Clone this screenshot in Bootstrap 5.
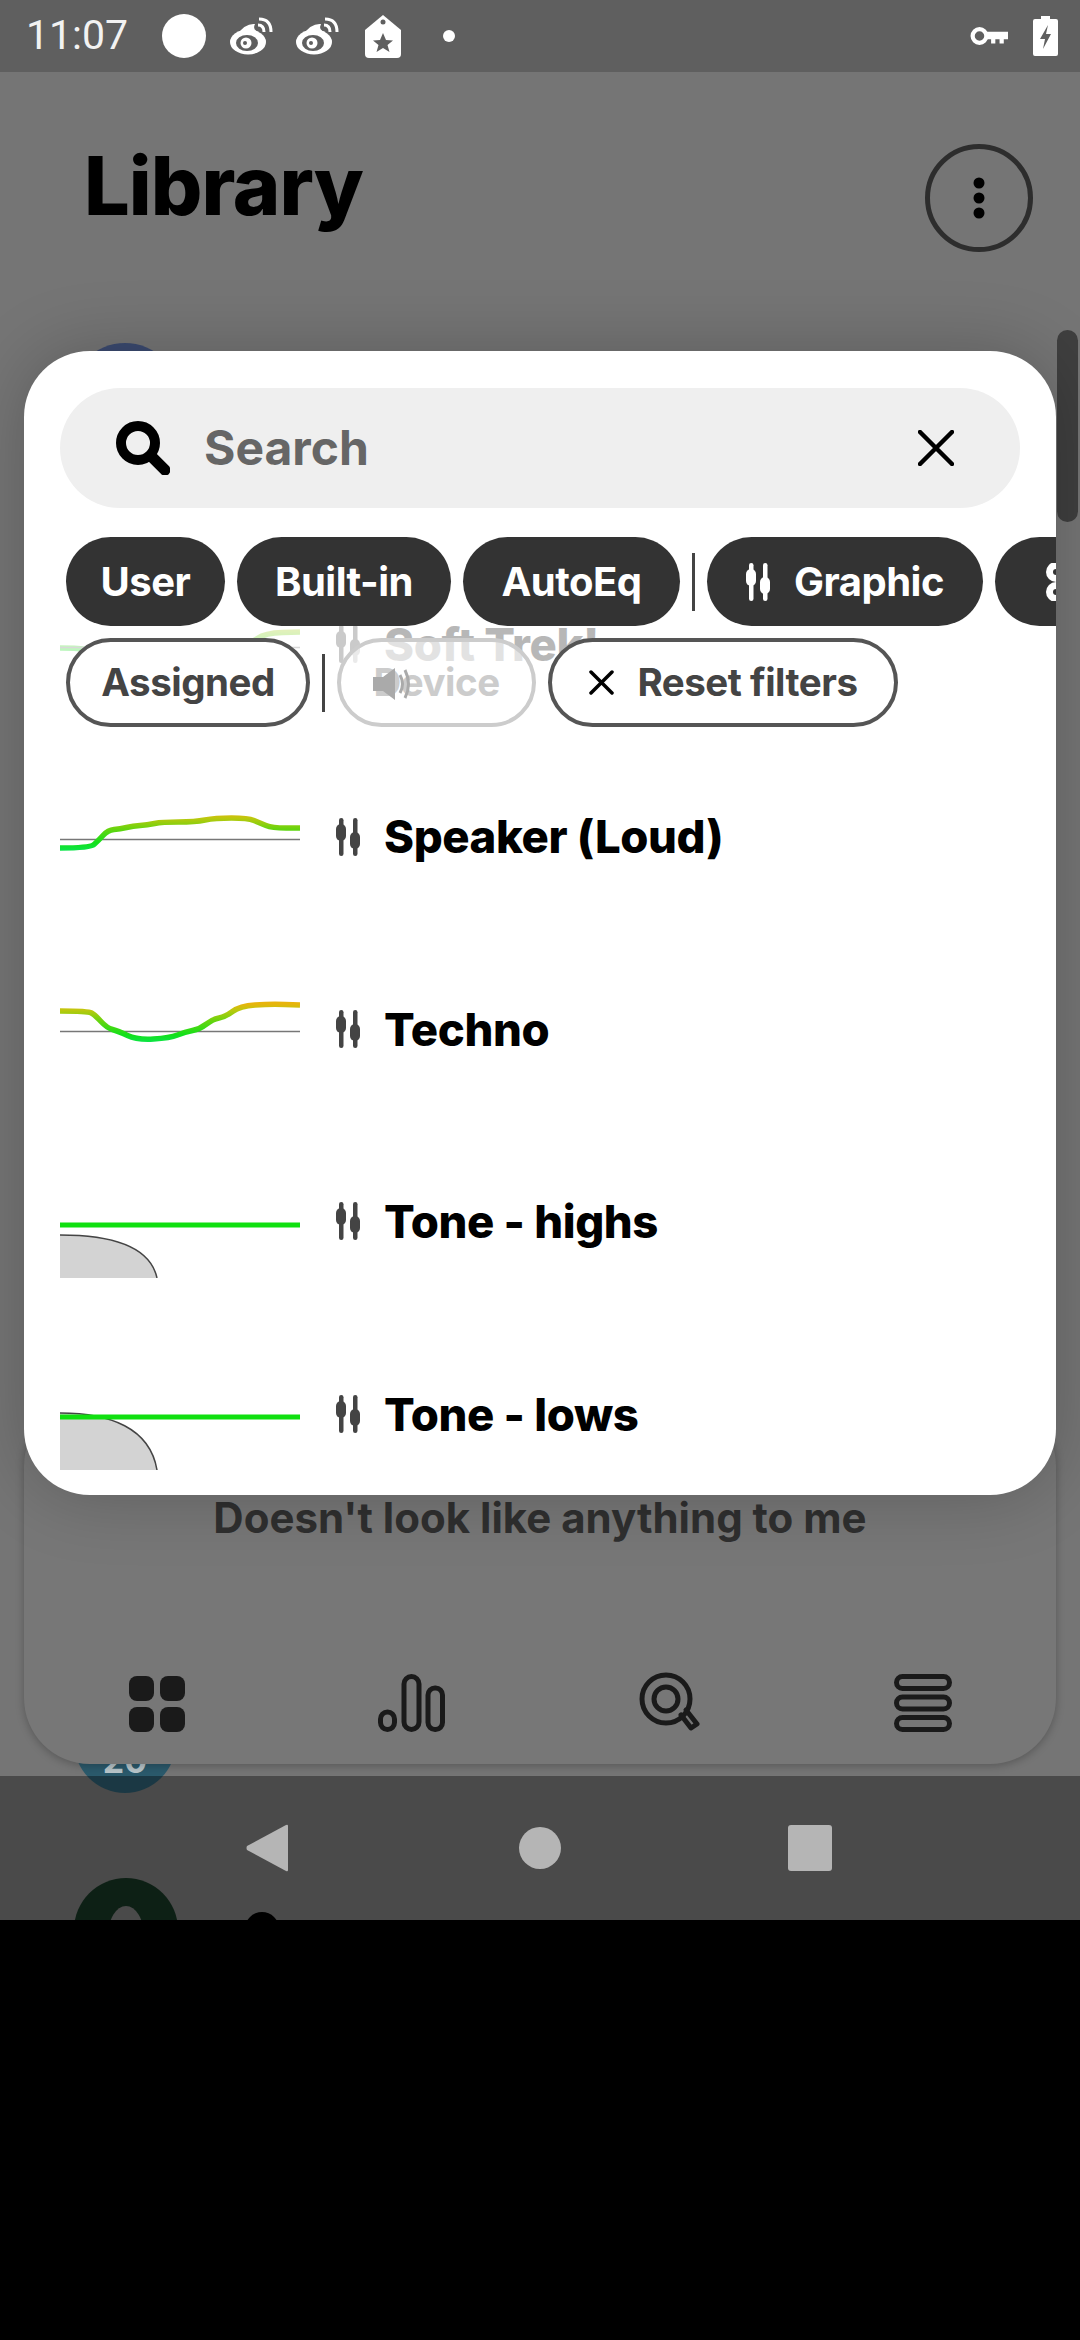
<!DOCTYPE html>
<html lang="en">
<head>
  <meta charset="UTF-8">
  <meta name="viewport" content="width=device-width, initial-scale=1.0">
  <title>Library</title>
  <link href="https://cdn.jsdelivr.net/npm/bootstrap@5.3.3/dist/css/bootstrap.min.css" rel="stylesheet">
  <style>
    body {
      background: #000;
      font-family: "Inter", "Lato", sans-serif;
    }

    .phone {
      position: relative;
      width: 1080px;
      height: 1920px;
      overflow: hidden;
      background: #757575;
    }

    /* status bar */
    .status-bar {
      position: relative;
      z-index: 3;
      height: 72px;
      padding: 0 22px 0 26px;
      background: #5f5f5f;
    }

    .status-time {
      width: 136px;
      font-family: "Roboto", sans-serif;
      font-size: 41px;
      color: #f2f2f2;
    }

    .st-weibo1 { margin-left: 23px; }
    .st-weibo2 { margin-left: 22px; }
    .st-tag { margin-left: 26px; }
    .st-dot { margin-left: 42px; }
    .st-batt { margin-left: 25px; }

    /* page behind the sheet */
    .page-head {
      padding: 72px 47px 0 84px;
    }

    .page-title {
      margin: -11px 0 0;
      font-size: 81px;
      font-weight: 800;
      letter-spacing: -1px;
      line-height: 106px;
      color: #000;
    }

    .round-btn {
      width: 108px;
      height: 108px;
      border: 5px solid #2d2d2d;
      border-radius: 50%;
    }

    .avatar {
      position: absolute;
      border-radius: 50%;
    }

    .avatar-top {
      left: 70px;
      top: 343px;
      width: 110px;
      height: 110px;
      background: #3b4a70;
    }

    .avatar-mid {
      left: 74px;
      top: 1691px;
      width: 102px;
      height: 102px;
      padding-top: 44px;
      background: #2b5a6c;
      color: #b9c6cb;
      font-size: 34px;
      font-weight: 700;
      text-align: center;
    }

    .avatar-low {
      left: 74px;
      top: 1878px;
      width: 104px;
      height: 104px;
      background: #163322;
    }

    .avatar-hole {
      position: absolute;
      left: 34px;
      top: 28px;
      width: 36px;
      height: 60px;
      border-radius: 50%;
      background: #757575;
    }

    .item-dot {
      position: absolute;
      left: 245px;
      top: 1912px;
      width: 34px;
      height: 34px;
      border-radius: 50%;
      background: #000;
    }

    .scroll-thumb {
      position: absolute;
      z-index: 1;
      left: 1057px;
      top: 330px;
      width: 21px;
      height: 192px;
      border-radius: 11px;
      background: #3f3f3f;
    }

    .bottom-card {
      position: absolute;
      left: 24px;
      top: 1400px;
      width: 1032px;
      height: 364px;
      padding-top: 88px;
      border-radius: 66px;
      background: #777;
      box-shadow: 0 2px 8px rgba(0, 0, 0, .25);
    }

    .empty-text {
      font-size: 42px;
      font-weight: 700;
      line-height: 60px;
      color: #2f2f2f;
      text-align: center;
    }

    .tab-row {
      position: absolute;
      left: 0;
      right: 0;
      top: 272px;
      padding: 0 104px 0 105px;
    }

    /* android nav bar */
    .nav-bar {
      position: absolute;
      z-index: 3;
      left: 0;
      right: 0;
      top: 1776px;
      height: 144px;
      padding-left: 246px;
      background: rgba(0, 0, 0, .37);
    }

    .nav-home { margin-left: 231px; }
    .nav-recent { margin-left: 227px; }

    /* filter sheet */
    .sheet {
      position: absolute;
      z-index: 2;
      left: 24px;
      top: 351px;
      width: 1032px;
      height: 1144px;
      overflow: hidden;
      border-radius: 66px;
      background: #fff;
      box-shadow: 0 0 70px rgba(0, 0, 0, .22);
    }

    .search-box {
      height: 120px;
      margin: 37px 36px 0;
      padding: 0 66px 0 56px;
      border-radius: 60px;
      background: #efefef;
    }

    .search-text {
      margin-left: 34px;
      font-size: 48px;
      font-weight: 700;
      color: #666;
    }

    .chip-row {
      height: 89px;
      margin-top: 29px;
      padding-left: 42px;
      gap: 12px;
      overflow: hidden;
    }

    .chip {
      flex: none;
      height: 89px;
      border-radius: 45px;
      font-size: 40px;
      font-weight: 700;
      letter-spacing: -.5px;
      white-space: nowrap;
    }

    .chip-on {
      background: #333;
      color: #fff;
    }

    .chip-off {
      background: #fff;
      border: 4px solid #555;
      color: #444;
      font-size: 38.5px;
    }

    .chip-user { width: 159px; }
    .chip-builtin { width: 214px; }
    .chip-autoeq { width: 217px; }
    .chip-graphic { width: 276px; gap: 24px; }
    .chip-param { width: 120px; padding-left: 45px; }
    .chip-assigned { width: 244px; }
    .chip-reset { width: 350px; gap: 24px; }

    .chip-device {
      position: relative;
      width: 199px;
      background: rgba(255, 255, 255, .6);
      border-color: #ccc;
      color: #ccc;
    }

    .device-icon {
      position: absolute;
      left: 32px;
      top: 25px;
    }

    .chip-sep {
      flex: none;
      align-self: center;
      width: 3px;
      height: 58px;
      background: #444;
    }

    .overlay-chips {
      position: absolute;
      z-index: 1;
      left: 42px;
      top: 287px;
      gap: 12px;
    }

    .eq-list {
      overflow: hidden;
      height: 868px;
    }

    .eq-row {
      flex: none;
      height: 192.4px;
      padding-left: 36px;
      gap: 36px;
    }

    .eq-row:first-child {
      margin-top: -75px;
      opacity: .28;
    }

    .eq-icon {
      margin-top: -6px;
    }

    .eq-name {
      margin: -4px 0 0 -12px;
      font-size: 45.5px;
      font-weight: 800;
      letter-spacing: -.4px;
      color: #000;
      white-space: nowrap;
    }
  </style>
</head>
<body>

<div class="phone">

  <!-- Status bar -->
  <div class="status-bar d-flex align-items-center">
    <div class="status-time">11:07</div>
    <svg width="44" height="44" viewBox="0 0 44 44"><circle cx="22" cy="22" r="22" fill="#fff"/></svg>
    <svg width="44" height="38" class="st-weibo1" viewBox="0 0 44 38">
      <ellipse cx="19" cy="25" rx="18" ry="12.5" fill="#fff"/>
      <path d="M8 18 Q16 6 26 7 Q23 13 30 15" fill="#fff"/>
      <ellipse cx="18" cy="26" rx="11" ry="8" fill="#5f5f5f"/>
      <circle cx="17" cy="26" r="5.5" fill="#fff"/>
      <circle cx="16" cy="26" r="2" fill="#5f5f5f"/>
      <path d="M29 8 Q35 8 35 15 M30 2 Q42 2 42 15" fill="none" stroke="#fff" stroke-width="3"/>
    </svg>
    <svg width="44" height="38" class="st-weibo2" viewBox="0 0 44 38">
      <ellipse cx="19" cy="25" rx="18" ry="12.5" fill="#fff"/>
      <path d="M8 18 Q16 6 26 7 Q23 13 30 15" fill="#fff"/>
      <ellipse cx="18" cy="26" rx="11" ry="8" fill="#5f5f5f"/>
      <circle cx="17" cy="26" r="5.5" fill="#fff"/>
      <circle cx="16" cy="26" r="2" fill="#5f5f5f"/>
      <path d="M29 8 Q35 8 35 15 M30 2 Q42 2 42 15" fill="none" stroke="#fff" stroke-width="3"/>
    </svg>
    <svg width="36" height="43" class="st-tag" viewBox="0 0 36 43">
      <path d="M18 0 L36 15 V39 Q36 43 32 43 H4 Q0 43 0 39 V15 Z" fill="#fff"/>
      <circle cx="18" cy="7" r="2.5" fill="#5f5f5f"/>
      <path d="M18 18 L21 25 L28 25.500 L22.500 30 L24.500 37 L18 33 L11.500 37 L13.500 30 L8 25.500 L15 25 Z" fill="#5f5f5f"/>
    </svg>
    <svg width="12" height="12" class="st-dot" viewBox="0 0 12 12"><circle cx="6" cy="6" r="6" fill="#fff"/></svg>
    <svg width="38" height="24" class="ms-auto" viewBox="0 0 36 22">
      <circle cx="9" cy="11" r="6.500" fill="none" stroke="#fff" stroke-width="4"/>
      <path d="M15 7 H36 V14 H32 V18 H28 V14 H24 V18 H20 V14 H15 Z" fill="#fff"/>
    </svg>
    <svg width="25" height="40" class="st-batt" viewBox="0 0 25 40">
      <path d="M8 0 H17 V3 H23 Q25 3 25 5 V38 Q25 40 23 40 H2 Q0 40 0 38 V5 Q0 3 2 3 H8 Z" fill="#fff"/>
      <path d="M15 9 L7 23 H12 L10 33 L18 18 H13 Z" fill="#5f5f5f"/>
    </svg>
  </div>

  <!-- Library page behind the sheet -->
  <div class="page-head d-flex justify-content-between align-items-start">
    <h1 class="page-title">Library</h1>
    <div class="round-btn d-flex align-items-center justify-content-center">
      <svg width="12" height="42" viewBox="0 0 12 42"><circle cx="6" cy="6" r="5.500"/><circle cx="6" cy="21" r="5.500"/><circle cx="6" cy="36" r="5.500"/></svg>
    </div>
  </div>

  <div class="avatar avatar-top"></div>
  <div class="avatar avatar-mid">20</div>
  <div class="avatar avatar-low"><div class="avatar-hole"></div></div>
  <div class="item-dot"></div>
  <div class="scroll-thumb"></div>

  <div class="bottom-card">
    <div class="empty-text">Doesn't look like anything to me</div>
    <div class="tab-row d-flex justify-content-between align-items-center">
      <svg width="56" height="58" viewBox="0 0 56 58" fill="#1a1a1a">
        <rect x="0" y="2" width="25" height="25" rx="8"/><rect x="31" y="2" width="25" height="25" rx="8"/>
        <rect x="0" y="33" width="25" height="25" rx="8"/><rect x="31" y="33" width="25" height="25" rx="8"/>
      </svg>
      <svg width="67" height="58" viewBox="0 0 67 58" fill="none" stroke="#1a1a1a" stroke-width="5">
        <rect x="2.500" y="38" width="14" height="17.500" rx="7"/>
        <rect x="26" y="2.500" width="15" height="53" rx="7.500"/>
        <rect x="50" y="14" width="14.500" height="41.500" rx="7"/>
      </svg>
      <svg width="62" height="62" viewBox="0 0 62 62" fill="none" stroke="#1a1a1a" stroke-linecap="round">
        <circle cx="27" cy="27" r="24" stroke-width="5"/>
        <circle cx="27" cy="27" r="12" stroke-width="5"/>
        <path d="M42 43 L52 56 L58 52 L47 38" stroke-width="5" stroke-linejoin="round"/>
      </svg>
      <svg width="58" height="58" viewBox="0 0 58 58" fill="none" stroke="#1a1a1a" stroke-width="5">
        <rect x="2.500" y="2.500" width="53" height="12" rx="6"/>
        <rect x="2.500" y="23" width="53" height="12" rx="6"/>
        <rect x="2.500" y="43.500" width="53" height="12" rx="6"/>
      </svg>
    </div>
  </div>

  <!-- Android nav bar -->
  <div class="nav-bar d-flex align-items-center">
    <svg width="42" height="48" viewBox="0 0 42 48"><path d="M42 2 Q42 0 40 1 L1 22 Q0 24 1 26 L40 47 Q42 48 42 46 Z" fill="#b5b5b5"/></svg>
    <svg width="42" height="42" class="nav-home" viewBox="0 0 42 42"><circle cx="21" cy="21" r="21" fill="#b5b5b5"/></svg>
    <svg width="44" height="46" class="nav-recent" viewBox="0 0 44 46"><rect width="44" height="46" rx="3" fill="#b5b5b5"/></svg>
  </div>

  <!-- Filter sheet -->
  <div class="sheet">
    <div class="search-box d-flex align-items-center">
      <svg width="54" height="54" viewBox="0 0 54 54" fill="none" stroke="#000" stroke-linecap="round">
        <circle cx="22" cy="22" r="17" stroke-width="10"/>
        <path d="M35 35 L49 49" stroke-width="11"/>
      </svg>
      <span class="search-text">Search</span>
      <svg width="36" height="36" class="ms-auto" viewBox="0 0 36 36" stroke="#000" stroke-width="4.500" stroke-linecap="round"><path d="M2 2 L34 34 M34 2 L2 34"/></svg>
    </div>

    <div class="chip-row d-flex">
      <div class="chip chip-on chip-user d-flex align-items-center justify-content-center">User</div>
      <div class="chip chip-on chip-builtin d-flex align-items-center justify-content-center">Built-in</div>
      <div class="chip chip-on chip-autoeq d-flex align-items-center justify-content-center">AutoEq</div>
      <div class="chip-sep"></div>
      <div class="chip chip-on chip-graphic d-flex align-items-center justify-content-center">
        <svg width="24" height="38" viewBox="0 0 24 38" fill="#fff"><rect x="3" width="4.500" height="38" rx="2.200"/><rect x="17" width="4.500" height="38" rx="2.200"/><rect y="6" width="10" height="17" rx="5"/><rect x="14" y="14" width="10" height="17" rx="5"/></svg>
        <span>Graphic</span>
      </div>
      <div class="chip chip-on chip-param d-flex align-items-center">
        <svg width="32" height="38" viewBox="0 0 32 38" class="flex-shrink-0"><circle cx="16" cy="9" r="10" fill="#fff"/><circle cx="16" cy="29" r="10" fill="#fff"/><circle cx="16" cy="9" r="3" fill="#333"/><circle cx="16" cy="29" r="3" fill="#333"/></svg>
      </div>
    </div>

    <div class="overlay-chips d-flex">
      <div class="chip chip-off chip-assigned d-flex align-items-center justify-content-center">Assigned</div>
      <div class="chip-sep"></div>
      <div class="chip chip-off chip-device d-flex align-items-center justify-content-center">
        Device
        <svg class="device-icon" width="40" height="34" viewBox="0 0 40 34" fill="none">
          <path d="M0 10 H10 L22 1 V33 L10 24 H0 Z" fill="#aaa"/>
          <path d="M27 8 Q32 17 27 26 M32 3 Q39 17 32 31" stroke="#aaa" stroke-width="3"/>
        </svg>
      </div>
      <div class="chip chip-off chip-reset d-flex align-items-center justify-content-center">
        <svg width="25" height="25" viewBox="0 0 25 25" stroke="#000" stroke-width="3.500" stroke-linecap="round"><path d="M2 2 L23 23 M23 2 L2 23"/></svg>
        <span>Reset filters</span>
      </div>
    </div>

    <div class="eq-list">
      <div class="eq-row d-flex align-items-center">
        <svg width="240" height="107" viewBox="0 0 240 107" fill="none">
          <path data-pts="0,54 30,54 60,65 130,62 190,50 205,39 240,38" stroke="url(#eqGrad)" stroke-width="5.500"/>
          <path d="M0 53.500 H240" stroke="#777" stroke-width="1.500"/>
        </svg>
        <svg width="24" height="38" class="eq-icon" viewBox="0 0 24 38" fill="#444"><rect x="3" width="4.500" height="38" rx="2.200"/><rect x="17" width="4.500" height="38" rx="2.200"/><rect y="6" width="10" height="17" rx="5"/><rect x="14" y="14" width="10" height="17" rx="5"/></svg>
        <div class="eq-name">Soft Trek!</div>
      </div>

      <div class="eq-row d-flex align-items-center">
        <svg width="240" height="107" viewBox="0 0 240 107" fill="none">
          <defs>
            <linearGradient id="eqGrad" gradientUnits="userSpaceOnUse" x1="0" y1="70" x2="0" y2="26">
              <stop offset="0" stop-color="#0ae86c"/>
              <stop offset=".3" stop-color="#12e01a"/>
              <stop offset=".62" stop-color="#68d40e"/>
              <stop offset=".86" stop-color="#bcc80e"/>
              <stop offset="1" stop-color="#e8b40c"/>
            </linearGradient>
          </defs>
          <path d="M0 53.500 H240" stroke="#777" stroke-width="1.500"/>
          <path data-pts="0,62 30,62 38,55 48,44 60,43 73,40 87,39 102,36 135,36 155,32 188,32 200,37 212,42 240,42" stroke="url(#eqGrad)" stroke-width="5.500"/>
        </svg>
        <svg width="24" height="38" class="eq-icon" viewBox="0 0 24 38" fill="#444"><rect x="3" width="4.500" height="38" rx="2.200"/><rect x="17" width="4.500" height="38" rx="2.200"/><rect y="6" width="10" height="17" rx="5"/><rect x="14" y="14" width="10" height="17" rx="5"/></svg>
        <div class="eq-name">Speaker (Loud)</div>
      </div>

      <div class="eq-row d-flex align-items-center">
        <svg width="240" height="107" viewBox="0 0 240 107" fill="none">
          <path d="M0 53.500 H240" stroke="#777" stroke-width="1.500"/>
          <path data-pts="0,33 28,33 35,37 47,50 58,53 77,62 110,60 125,54 140,51 153,41 165,39 180,28 210,26 240,27" stroke="url(#eqGrad)" stroke-width="5.500"/>
        </svg>
        <svg width="24" height="38" class="eq-icon" viewBox="0 0 24 38" fill="#444"><rect x="3" width="4.500" height="38" rx="2.200"/><rect x="17" width="4.500" height="38" rx="2.200"/><rect y="6" width="10" height="17" rx="5"/><rect x="14" y="14" width="10" height="17" rx="5"/></svg>
        <div class="eq-name">Techno</div>
      </div>

      <div class="eq-row d-flex align-items-center">
        <svg width="240" height="107" viewBox="0 0 240 107" fill="none">
          <path d="M0 64 C50 64 90 75 97 107 H0 Z" fill="#d3d3d3"/>
          <path d="M0 64 C50 64 90 75 97 107" stroke="#444" stroke-width="1.500"/>
          <path d="M0 54 H240" stroke="#10e010" stroke-width="5"/>
        </svg>
        <svg width="24" height="38" class="eq-icon" viewBox="0 0 24 38" fill="#444"><rect x="3" width="4.500" height="38" rx="2.200"/><rect x="17" width="4.500" height="38" rx="2.200"/><rect y="6" width="10" height="17" rx="5"/><rect x="14" y="14" width="10" height="17" rx="5"/></svg>
        <div class="eq-name">Tone - highs</div>
      </div>

      <div class="eq-row d-flex align-items-center">
        <svg width="240" height="107" viewBox="0 0 240 107" fill="none">
          <path d="M0 50 C50 50 90 65 97 107 H0 Z" fill="#d3d3d3"/>
          <path d="M0 50 C50 50 90 65 97 107" stroke="#444" stroke-width="1.500"/>
          <path d="M0 54 H240" stroke="#10e010" stroke-width="5"/>
        </svg>
        <svg width="24" height="38" class="eq-icon" viewBox="0 0 24 38" fill="#444"><rect x="3" width="4.500" height="38" rx="2.200"/><rect x="17" width="4.500" height="38" rx="2.200"/><rect y="6" width="10" height="17" rx="5"/><rect x="14" y="14" width="10" height="17" rx="5"/></svg>
        <div class="eq-name">Tone - lows</div>
      </div>
    </div>
  </div>
</div>

<script src="https://cdn.jsdelivr.net/npm/bootstrap@5.3.3/dist/js/bootstrap.bundle.min.js"></script>
<script>
  // Smooth the response curves: quadratic segments through the midpoints
  document.querySelectorAll('path[data-pts]').forEach(path => {
    const pts = path.dataset.pts.split(' ').map(p => p.split(',').map(Number));
    let d = `M${pts[0][0]} ${pts[0][1]}`;
    for (let i = 1; i < pts.length - 1; i++) {
      const mx = (pts[i][0] + pts[i + 1][0]) / 2;
      const my = (pts[i][1] + pts[i + 1][1]) / 2;
      d += ` Q${pts[i][0]} ${pts[i][1]} ${mx} ${my}`;
    }
    const last = pts[pts.length - 1];
    path.setAttribute('d', d + ` L${last[0]} ${last[1]}`);
  });
</script>
</body>
</html>
